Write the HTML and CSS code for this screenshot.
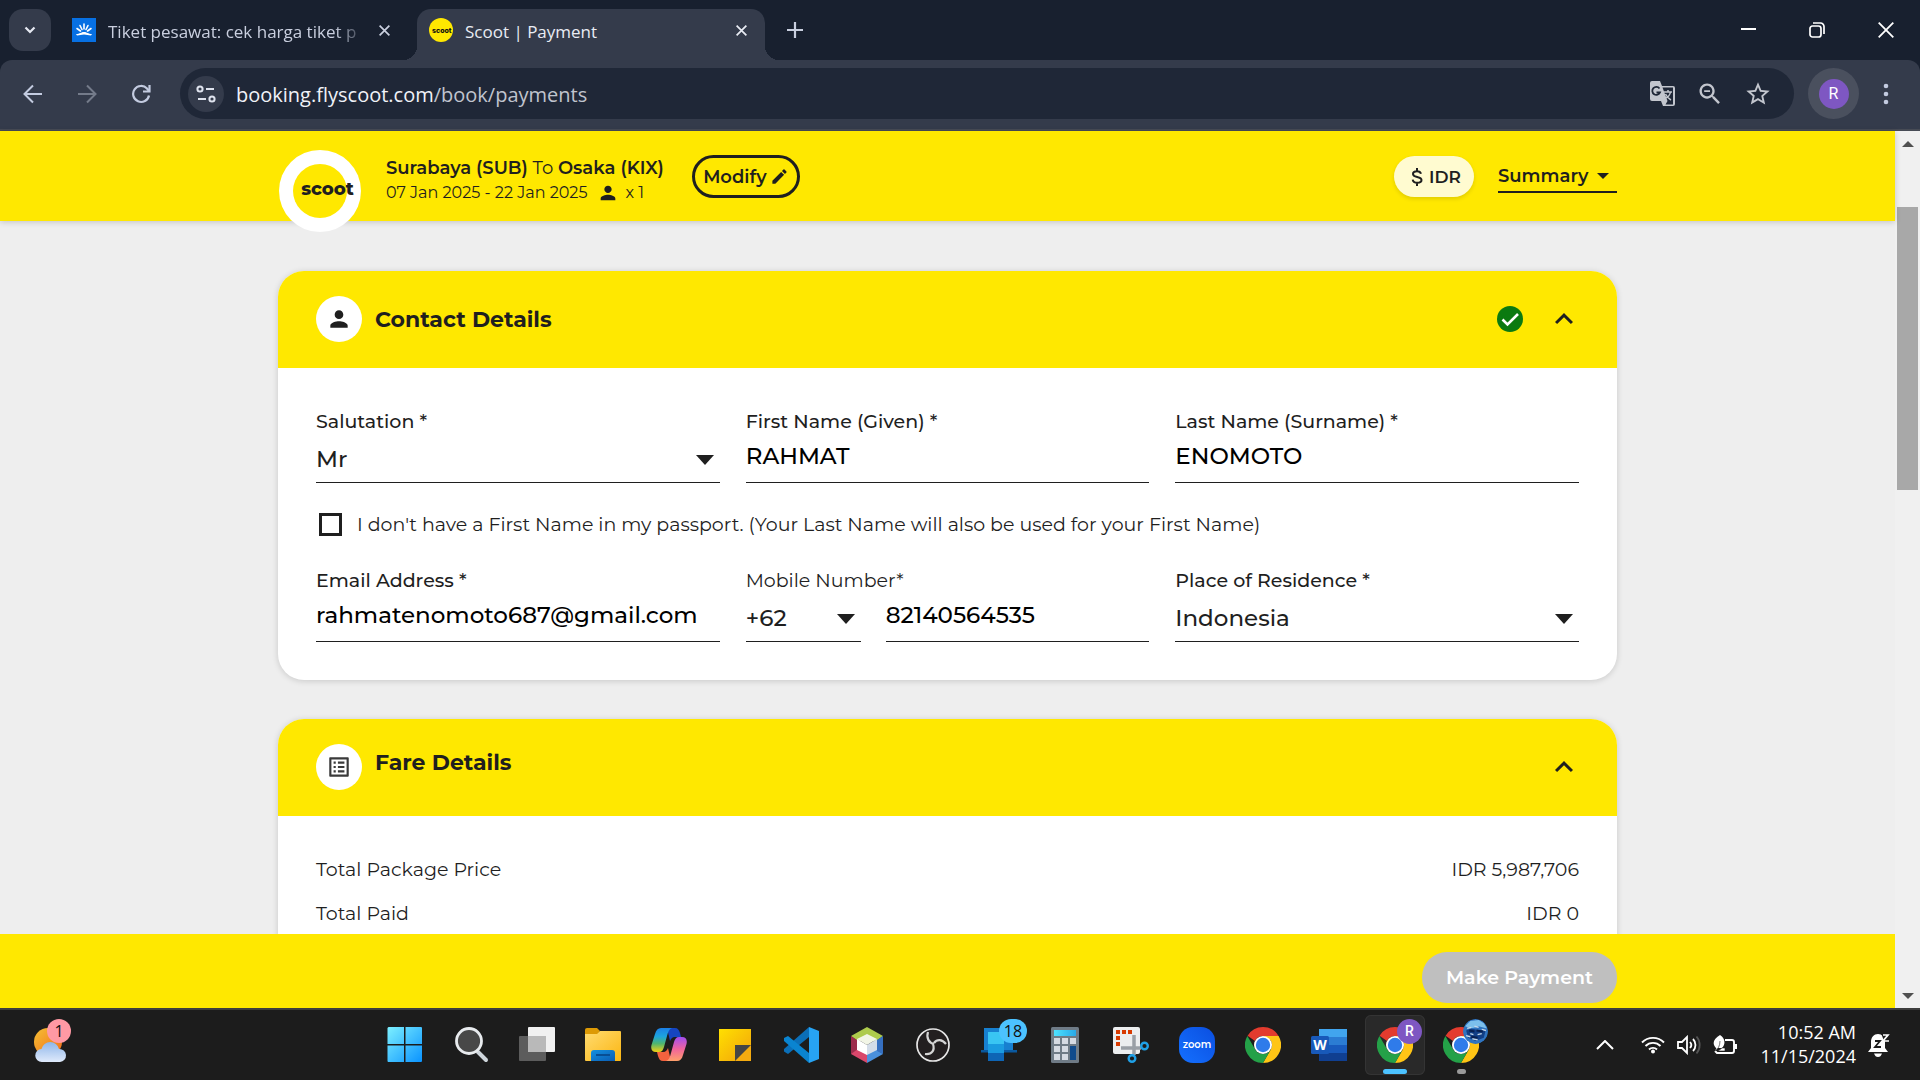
FILE: index.html
```html
<!DOCTYPE html>
<html lang="en">
<head>
<meta charset="utf-8">
<meta name="viewport" content="width=device-width, initial-scale=1">
<title>Scoot | Payment</title>
<link rel="stylesheet" href="styles.css">
</head>
<body>
<svg class="defs" width="0" height="0" aria-hidden="true">
  <defs>
    <linearGradient id="g-win" x1="0" y1="0" x2="1" y2="1"><stop offset="0" stop-color="#7df0ff"/><stop offset="1" stop-color="#0a93ff"/></linearGradient>
    <linearGradient id="g-sun" x1="0" y1="0" x2="1" y2="1"><stop offset="0" stop-color="#f5c033"/><stop offset="1" stop-color="#f26a1b"/></linearGradient>
    <linearGradient id="g-cloud" x1="0" y1="0" x2="0" y2="1"><stop offset="0" stop-color="#8fb6ea"/><stop offset="1" stop-color="#dfeafb"/></linearGradient>
    <linearGradient id="g-folder" x1="0" y1="0" x2="1" y2="1"><stop offset="0" stop-color="#ffdb70"/><stop offset="1" stop-color="#fbb612"/></linearGradient>
    <linearGradient id="g-pocket" x1="0" y1="0" x2="1" y2="1"><stop offset="0" stop-color="#1490df"/><stop offset="1" stop-color="#0a5db5"/></linearGradient>
    <linearGradient id="g-cop1" x1="0" y1="0" x2="0" y2="1"><stop offset="0" stop-color="#1c7fe6"/><stop offset=".35" stop-color="#1ca4de"/><stop offset=".65" stop-color="#4fb56f"/><stop offset="1" stop-color="#f3d113"/></linearGradient>
    <linearGradient id="g-cop2" x1="0" y1="0" x2="0" y2="1"><stop offset="0" stop-color="#a24df0"/><stop offset=".5" stop-color="#f0649c"/><stop offset="1" stop-color="#ffa06a"/></linearGradient>
    <linearGradient id="g-note" x1="0" y1="0" x2="1" y2="1"><stop offset="0" stop-color="#ffe000"/><stop offset="1" stop-color="#f2a20c"/></linearGradient>
    <linearGradient id="g-calc" x1="0" y1="0" x2="1" y2="0"><stop offset="0" stop-color="#4de2ff"/><stop offset="1" stop-color="#29a9e8"/></linearGradient>
    <linearGradient id="g-zoom" x1="1" y1="0" x2="0" y2="1"><stop offset="0" stop-color="#0b4fe0"/><stop offset="1" stop-color="#1470ff"/></linearGradient>
    <symbol id="chrome" viewBox="0 0 36 36">
      <path fill="#e33b2e" d="M18 0a18 18 0 0 1 15.600 9H18a9 9 0 0 0-8 5L2.600 8.700A18 18 0 0 1 18 0z"/>
      <path fill="#ffc515" d="M33.600 9A18 18 0 0 1 18 36l7.800-13.500A9 9 0 0 0 25.800 13.500L18 9z"/>
      <path fill="#24a148" d="M18 36A18 18 0 0 1 2.400 9l7.800 13.500A9 9 0 0 0 25.800 22.500z"/>
      <circle cx="18" cy="18" r="9" fill="#fff"/><circle cx="18" cy="18" r="7.200" fill="#2f7bea"/>
    </symbol>
    <symbol id="person" viewBox="0 0 24 24"><path d="M12 12c2.210 0 4-1.790 4-4s-1.790-4-4-4-4 1.790-4 4 1.790 4 4 4zm0 2c-2.670 0-8 1.340-8 4v2h16v-2c0-2.660-5.330-4-8-4z"/></symbol>
    <symbol id="chevron" viewBox="0 0 24 24"><path d="M12 8l-6 6 1.410 1.410L12 10.830l4.590 4.580L18 14z"/></symbol>
    <symbol id="close" viewBox="0 0 12 12"><path d="M1.500 1.500l9 9M10.500 1.500l-9 9" fill="none" stroke="currentColor" stroke-width="1.600"/></symbol>
  </defs>
</svg>

<div class="browser">
  <div class="tabstrip">
    <button class="tab-search" aria-label="Search tabs"><svg width="12" height="8" viewBox="0 0 12 8"><path d="M1.500 1.500L6 6l4.500-4.500" fill="none" stroke="#e6e9f2" stroke-width="2.200"/></svg></button>
    <div class="tab">
      <svg width="24" height="24" viewBox="0 0 24 24"><path fill="#0770e3" d="M0 0h24v24H0z"/><path d="M12 6v5M8 7.500l2 4M16 7.500l-2 4M5 10.500l3.500 2.500M19 10.500L15.500 13" stroke="#fff" stroke-width="1.600" stroke-linecap="round"/><path d="M4 16c4 0 5-2 8-2s4 2 8 2l-1 1.500c-3 0-4-1-7-1s-4 1-7 1z" fill="#fff"/></svg>
      <span class="tab-title faded">Tiket pesawat: cek harga tiket p</span>
      <button class="tab-close" aria-label="Close tab"><svg width="13" height="13"><use href="#close"/></svg></button>
    </div>
    <div class="tab active">
      <svg width="24" height="24" viewBox="0 0 24 24"><circle cx="12" cy="12" r="12" fill="#ffe800"/><text x="3" y="15" class="fav-word">scoot</text></svg>
      <span class="tab-title">Scoot | Payment</span>
      <button class="tab-close" aria-label="Close tab"><svg width="13" height="13"><use href="#close"/></svg></button>
    </div>
    <button class="new-tab" aria-label="New tab"><svg width="16" height="16" viewBox="0 0 16 16"><path d="M8 0v16M0 8h16" stroke="currentColor" stroke-width="2.200"/></svg></button>
    <div class="win-controls">
      <button aria-label="Minimize"><svg width="16" height="16" viewBox="0 0 16 16"><path d="M1 7h15" stroke="#fff" stroke-width="2"/></svg></button>
      <button aria-label="Restore"><svg width="16" height="16" viewBox="0 0 16 16" fill="none" stroke="#fff" stroke-width="1.700"><rect x="1" y="4" width="11" height="11" rx="2.500"/><path d="M4 1h7.500A3.500 3.500 0 0 1 15 4.500V12"/></svg></button>
      <button aria-label="Close"><svg width="16" height="16" viewBox="0 0 16 16"><path d="M.7.700l14.600 14.600M15.300.700L.700 15.300" stroke="#fff" stroke-width="1.800"/></svg></button>
    </div>
  </div>

  <div class="toolbar">
    <button class="nav" aria-label="Back"><svg width="20" height="20" viewBox="0 0 20 20" fill="none" stroke="#c3cbe0" stroke-width="2"><path d="M19 10H2M10 1.500L1.500 10l8.500 8.500"/></svg></button>
    <button class="nav" aria-label="Forward"><svg width="20" height="20" viewBox="0 0 20 20" fill="none" stroke="#747b8a" stroke-width="2"><path d="M1 10h17M10 1.500l8.500 8.500-8.500 8.500"/></svg></button>
    <button class="nav" aria-label="Reload"><svg width="20" height="20" viewBox="0 0 20 20" fill="none" stroke="#c3cbe0" stroke-width="2.200"><path d="M18 11.500A8 8 0 1 1 16 4.500L18 7"/><path d="M18.500 1v6.500H12"/></svg></button>
    <div class="omnibox">
      <button class="site-info" aria-label="Site information"><svg width="20" height="18" viewBox="0 0 20 18" fill="none" stroke="#dfe3ee" stroke-width="2"><circle cx="4" cy="4" r="2.600"/><path d="M10 4h8M2 14h8"/><circle cx="16" cy="14" r="2.600"/></svg></button>
      <div class="url"><span class="host">booking.flyscoot.com</span>/book/payments</div>
      <button aria-label="Translate"><svg width="26" height="26" viewBox="0 0 26 26"><path fill="#c3c6ce" d="M2 0h8l2 5h11a2 2 0 0 1 2 2v16a2 2 0 0 1-2 2H13l-2-5H2a2 2 0 0 1-2-2V2a2 2 0 0 1 2-2z"/><path fill="#1f2737" d="M12.500 6.500H23v17h-7.500l2-3.500z"/><path d="M9.500 7.500A4 4 0 1 0 10 11.500H6.500" fill="none" stroke="#1f2737" stroke-width="1.800"/><path d="M14 11h8M18 9v2M20.500 11c-.5 3-3 5.500-6 6.500M15.500 13c1.500 3 3.500 5 5.500 6" fill="none" stroke="#c3c6ce" stroke-width="1.500"/></svg></button>
      <button aria-label="Zoom"><svg width="28" height="28" viewBox="0 0 24 24" fill="#c3c6ce"><path d="M15.500 14h-.79l-.28-.27C15.410 12.590 16 11.110 16 9.500 16 5.910 13.090 3 9.500 3S3 5.910 3 9.500 5.910 16 9.500 16c1.610 0 3.090-.59 4.230-1.570l.27.280v.79l5 4.990L20.490 19l-4.990-5zm-6 0C7.010 14 5 11.990 5 9.500S7.010 5 9.500 5 14 7.010 14 9.500 11.990 14 9.500 14zM7 8.700h5v1.600H7z"/></svg></button>
      <button aria-label="Bookmark"><svg width="28" height="28" viewBox="0 0 24 24" fill="#c3c6ce"><path d="M22 9.240l-7.190-.62L12 2 9.190 8.630 2 9.240l5.460 4.730L5.820 21 12 17.270 18.180 21l-1.630-7.030L22 9.240zM12 15.400l-3.760 2.270 1-4.280-3.320-2.880 4.380-.38L12 6.100l1.710 4.040 4.380.38-3.320 2.880 1 4.280L12 15.400z"/></svg></button>
    </div>
    <button class="profile" aria-label="Profile"><span>R</span></button>
    <button class="menu" aria-label="Menu"><svg width="6" height="22" viewBox="0 0 6 22" fill="#c3cbe0"><circle cx="3" cy="3" r="2.300"/><circle cx="3" cy="11" r="2.300"/><circle cx="3" cy="19" r="2.300"/></svg></button>
  </div>

  <div class="viewport">
    <div class="site">
      <header class="site-header">
        <div class="container header-row">
          <a class="logo" href="#" aria-label="Scoot home"><span class="logo-disc"></span><span class="wordmark">scoot</span></a>
          <div class="trip">
            <div class="route"><b>Surabaya (SUB)</b> To <b>Osaka (KIX)</b></div>
            <div class="dates">07 Jan 2025 - 22 Jan 2025 <svg width="22" height="22"><use href="#person"/></svg> x 1</div>
          </div>
          <button class="modify">Modify <svg width="19" height="19" viewBox="0 0 24 24"><path d="M3 17.250V21h3.750L17.810 9.940l-3.750-3.750L3 17.250zM20.710 7.040a1 1 0 0 0 0-1.410l-2.340-2.340a1 1 0 0 0-1.410 0l-1.830 1.830 3.750 3.750 1.830-1.830z"/></svg></button>
          <button class="currency"><svg width="12" height="18" viewBox="0 0 12 18" fill="none" stroke="#1f1f1f" stroke-width="2"><path d="M10 5.800C9.500 3.800 8 3.200 6 3.200c-2.200 0-4 .9-4 2.700 0 4.200 8.500 1.800 8.500 6.100 0 1.900-1.900 2.800-4.200 2.800-2.500 0-4.300-1-4.600-3.200M6 0v3.200M6 14.800V18"/></svg>IDR</button>
          <button class="summary">Summary <svg width="12" height="6" viewBox="0 0 12 6"><path d="M0 0h12L6 6z"/></svg></button>
        </div>
      </header>

      <main class="content">
        <div class="container stack">
          <section class="card">
            <div class="card-head">
              <span class="badge-icon"><svg width="26" height="26"><use href="#person"/></svg></span>
              <h2>Contact Details</h2>
              <svg class="done" width="26" height="26" viewBox="0 0 26 26"><circle cx="13" cy="13" r="13" fill="#0b7a10"/><path d="M5.500 13.500l5 5L21 8" fill="none" stroke="#fff" stroke-width="2.600"/></svg>
              <button class="toggle" aria-label="Collapse contact details"><svg width="36" height="36"><use href="#chevron"/></svg></button>
            </div>
            <form class="fields">
              <div class="field">
                <label for="salutation">Salutation *</label>
                <div class="select"><select id="salutation"><option>Mr</option></select><svg width="18" height="10" viewBox="0 0 18 10"><path d="M0 0h18L9 10z"/></svg></div>
              </div>
              <div class="field">
                <label for="first">First Name (Given) *</label>
                <input id="first" type="text" value="RAHMAT">
              </div>
              <div class="field">
                <label for="last">Last Name (Surname) *</label>
                <input id="last" type="text" value="ENOMOTO">
              </div>
              <label class="check"><input type="checkbox"> I don't have a First Name in my passport. (Your Last Name will also be used for your First Name)</label>
              <div class="field">
                <label for="email">Email Address *</label>
                <input id="email" type="email" value="rahmatenomoto687@gmail.com">
              </div>
              <div class="field">
                <label class="light" for="mobile">Mobile Number*</label>
                <div class="phone">
                  <div class="select"><select aria-label="Country code"><option>+62</option></select><svg width="18" height="10" viewBox="0 0 18 10"><path d="M0 0h18L9 10z"/></svg></div>
                  <input id="mobile" type="tel" value="82140564535">
                </div>
              </div>
              <div class="field">
                <label for="residence">Place of Residence *</label>
                <div class="select"><select id="residence"><option>Indonesia</option></select><svg width="18" height="10" viewBox="0 0 18 10"><path d="M0 0h18L9 10z"/></svg></div>
              </div>
            </form>
          </section>

          <section class="card">
            <div class="card-head fare">
              <span class="badge-icon"><svg width="26" height="26" viewBox="0 0 24 24" fill="#3a3a3a"><path d="M19 5v14H5V5h14m1.100-2H3.900c-.5 0-.9.400-.9.900v16.200c0 .4.400.9.900.9h16.200c.4 0 .9-.5.900-.9V3.900c0-.5-.5-.9-.9-.9zM11 7h6v2h-6V7zm0 4h6v2h-6v-2zm0 4h6v2h-6zM7 7h2v2H7zm0 4h2v2H7zm0 4h2v2H7z"/></svg></span>
              <h2>Fare Details</h2>
              <button class="toggle" aria-label="Collapse fare details"><svg width="36" height="36"><use href="#chevron"/></svg></button>
            </div>
            <dl class="totals">
              <div><dt>Total Package Price</dt><dd>IDR 5,987,706</dd></div>
              <div><dt>Total Paid</dt><dd>IDR 0</dd></div>
            </dl>
          </section>
        </div>
      </main>

      <footer class="pay-bar">
        <div class="container pay-row"><button class="pay" disabled>Make Payment</button></div>
      </footer>
    </div>
    <div class="scrollbar">
      <svg width="12" height="6" viewBox="0 0 12 6"><path d="M6 0l6 6H0z" fill="#505050"/></svg>
      <div class="track"><div class="thumb"></div></div>
      <svg width="12" height="6" viewBox="0 0 12 6"><path d="M0 0h12L6 6z" fill="#505050"/></svg>
    </div>
  </div>
</div>

<div class="taskbar">
  <div class="widgets">
    <button class="app" aria-label="Weather"><svg width="36" height="36" viewBox="0 0 36 36"><circle cx="15" cy="15" r="14" fill="url(#g-sun)"/><path d="M9 35a6.500 6.500 0 0 1-.5-13 9 9 0 0 1 17.500 0A6.500 6.500 0 0 1 27 35z" fill="url(#g-cloud)"/></svg><span class="count pink">1</span></button>
  </div>
  <div class="apps">
    <button class="app" aria-label="Start"><svg width="36" height="36" viewBox="0 0 36 36"><path fill="url(#g-win)" d="M1.500 0H17v17H.500V1zM18.500 0H34a1 1 0 0 1 1 1v16H18.500zM.5 18.500H17V35H1.500a1 1 0 0 1-1-1zM18.500 18.500H35V34a1 1 0 0 1-1 1H18.500z"/></svg></button>
    <button class="app" aria-label="Search"><svg width="36" height="36" viewBox="0 0 36 36"><path d="M25 25l8 8" stroke="#cfd6dc" stroke-width="4" stroke-linecap="round"/><circle cx="16" cy="14" r="12.500" fill="#484848" stroke="#e8ebee" stroke-width="2.800"/></svg></button>
    <button class="app" aria-label="Task view"><svg width="36" height="36" viewBox="0 0 36 36"><rect x="9" y="0" width="27" height="25" rx="1" fill="#f1f1f1"/><rect x="0" y="9" width="27" height="25" rx="1" fill="#5c5c5c"/><path d="M9 9h18v16H9z" fill="#b9b9b9"/></svg></button>
    <button class="app" aria-label="File Explorer"><svg width="36" height="36" viewBox="0 0 36 36"><path d="M0 3a2 2 0 0 1 2-2h10l3 3-3 4H0z" fill="#dd9a05"/><path d="M0 7h12l3-3h20a1 1 0 0 1 1 1v28a1 1 0 0 1-1 1H1a1 1 0 0 1-1-1z" fill="url(#g-folder)"/><path d="M6 34V26a3 3 0 0 1 3-3h18a3 3 0 0 1 3 3v8z" fill="url(#g-pocket)"/><path d="M11 28h14" stroke="#084e94" stroke-width="2"/></svg></button>
    <button class="app" aria-label="Copilot"><svg width="36" height="36" viewBox="0 0 36 36"><path d="M16 1h8c3 0 4 2 5 5l1 4h-6c-3 0-4 2-5 4z" fill="#1545c0"/><path d="M20 34h-8c-3 0-4-2-5-5l-1-4h6c3 0 4-2 5-4z" fill="#f4623e"/><path d="M10 1h11c-3 1-4 4-5 8l-3 11c-1 3-2 5-5 5H5c-4 0-5.500-3-4.500-7L4 7c1-4 3-6 6-6z" fill="url(#g-cop1)"/><path d="M26 34H15c3-1 4-4 5-8l3-11c1-3 2-5 5-5h3c4 0 5.500 3 4.500 7L32 28c-1 4-3 6-6 6z" fill="url(#g-cop2)"/></svg></button>
    <button class="app" aria-label="Sticky Notes"><svg width="36" height="36" viewBox="0 0 36 36"><path d="M2 2h32v32H2z" fill="url(#g-note)"/><path d="M34 18v16H18z" fill="#f5ab10"/><path d="M18 18h16L18 34z" fill="#454545"/></svg></button>
    <button class="app" aria-label="Visual Studio Code"><svg width="36" height="36" viewBox="0 0 36 36"><path d="M26 0v10L5 27 1 24.500V22z" fill="#0b6fb8"/><path d="M1 11l4-2 21 17v10L1 14z" fill="#0a84d0"/><path d="M26 0l10 4v28l-10 4z" fill="#27a3f3"/></svg></button>
    <button class="app" aria-label="NetBeans"><svg width="36" height="36" viewBox="0 0 36 36"><path d="M18 0l16 9-8 6-8-6-8 6-8-6z" fill="#aecb4c"/><path d="M2 9l6 4v13l-6 1z" fill="#9c2c4c"/><path d="M2 27l7-5 9 5v9z" fill="#d9476b"/><path d="M34 27l-7-5-9 5v9z" fill="#4a90dc"/><path d="M34 9l-6 4v11l6 3z" fill="#356fc0"/><path d="M18 7l10 5-10 6-10-6z" fill="#f2f5e6"/><path d="M8 12l10 6v10L8 23z" fill="#fff"/><path d="M28 12l-10 6v10l10-5z" fill="#d3dce8"/></svg></button>
    <button class="app" aria-label="OBS Studio"><svg width="36" height="36" viewBox="0 0 36 36"><circle cx="18" cy="18" r="16" fill="#231f20" stroke="#e6e6e6" stroke-width="1.700"/><path d="M13 5c-2 6 1 11 6 12M31 17c-4-5-9-5-12-1M10 27c7 1 10-4 8-10" fill="none" stroke="#d5d5d5" stroke-width="2.200"/></svg></button>
    <button class="app" aria-label="Phone Link"><svg width="36" height="36" viewBox="0 0 36 36"><path d="M3 1h29v22H3z" fill="#1780d0"/><path d="M0 23h36v2.500H0z" fill="#0a599f"/><path d="M7 5h16v29H7z" fill="#1a9be0"/><path d="M7 5h16v12H7z" fill="#39c5f3"/><path d="M7 26h16v8H7z" fill="#0e65b5"/></svg><span class="count blue">18</span></button>
    <button class="app" aria-label="Calculator"><svg width="36" height="36" viewBox="0 0 36 36"><rect x="4" y="0" width="28" height="36" rx="1.500" fill="#6f7b86"/><path d="M7 3h22v6H7z" fill="url(#g-calc)"/><path d="M7 11h6v6H7zM15 11h6v6h-6zM23 11h6v6h-6zM7 19h6v6H7zM15 19h6v6h-6zM7 27h6v6H7zM15 27h6v6h-6z" fill="#d5dae2"/><path d="M23 19h6v14h-6z" fill="#104b8c"/></svg></button>
    <button class="app" aria-label="Snipping Tool"><svg width="36" height="36" viewBox="0 0 36 36"><rect width="27" height="27" rx="2" fill="#eceeef"/><path d="M3 3h4v4H3zM9 3h4v4H9zM15 3h4v4h-4zM3 9h4v4H3zM3 15h4v4H3z" fill="#d83b01"/><path d="M8 21h20M21 8v20" stroke="#9aa0a6" stroke-width="3.500"/><circle cx="31.500" cy="19" r="3.300" fill="none" stroke="#1fa0e6" stroke-width="2.400"/><circle cx="19" cy="31.500" r="3.300" fill="none" stroke="#1fa0e6" stroke-width="2.400"/></svg></button>
    <button class="app" aria-label="Zoom"><svg width="36" height="36" viewBox="0 0 36 36"><rect width="36" height="36" rx="14" fill="url(#g-zoom)"/><text x="18" y="21" text-anchor="middle" class="zoom-word">zoom</text></svg></button>
    <button class="app" aria-label="Google Chrome"><svg width="36" height="36"><use href="#chrome"/></svg></button>
    <button class="app" aria-label="Word"><svg width="36" height="36" viewBox="0 0 36 36"><path d="M8 2h28v8H8z" fill="#41a5ee"/><path d="M8 10h28v8H8z" fill="#2b7cd3"/><path d="M8 18h28v8H8z" fill="#185abd"/><path d="M8 26h28v8H8z" fill="#103f91"/><rect y="9" width="18" height="18" rx="1.500" fill="#1859b9"/><text x="9" y="23" text-anchor="middle" class="word-w">W</text></svg></button>
    <button class="app running current" aria-label="Chrome, profile R"><svg width="36" height="36"><use href="#chrome"/></svg><span class="avatar">R</span></button>
    <button class="app running" aria-label="Chrome, second profile"><svg width="36" height="36"><use href="#chrome"/></svg><svg class="avatar photo" viewBox="0 0 24 24"><circle cx="12" cy="12" r="12" fill="#2f74c0"/><path d="M2 7l5-5 8-1 5 3 3 5-8-2-7 2z" fill="#7cc0ec"/><path d="M3 11l5-2 8 2 6-1-2 8-8 3-7-3z" fill="#123f86"/><path d="M4 9l4-1M11 7l4 1M18 10l4 1M7 14l3 1M14 15l4-1M9 19l5 1M3 16l4 1" stroke="#c5d8e8" stroke-width="1.400"/><path d="M6 11l5 1M13 11l6 1M8 17l6 1" stroke="#071f4f" stroke-width="1.800"/></svg></button>
  </div>
  <div class="tray">
    <svg class="up" width="18" height="10" viewBox="0 0 18 10"><path d="M1 9l8-8 8 8" fill="none" stroke="#fff" stroke-width="2"/></svg>
    <svg width="24" height="18" viewBox="0 0 24 18" fill="none" stroke="#fff" stroke-width="1.900"><path d="M1 6.500a15.500 15.500 0 0 1 22 0M4.500 10a10.500 10.500 0 0 1 15 0M8 13.500a5.700 5.700 0 0 1 8 0"/><circle cx="12" cy="15.500" r="2" fill="#fff" stroke="none"/></svg>
    <svg width="24" height="20" viewBox="0 0 24 20" fill="none" stroke="#fff" stroke-width="1.800"><path d="M1 7h4l5-5v16l-5-5H1z"/><path d="M13 7a4.500 4.500 0 0 1 0 6M16 4a8.500 8.500 0 0 1 0 12"/><path d="M19.500 1.500a13 13 0 0 1 0 17" stroke="#555"/></svg>
    <svg width="24" height="20" viewBox="0 0 24 20"><path d="M12 5h7a2 2 0 0 1 2 2v9a2 2 0 0 1-2 2H4l-2-2" fill="none" stroke="#fff" stroke-width="1.900"/><path d="M21.500 9H24v5h-2.500zM7 0c5 3 6 9 2 13H3C-1 9 0 4 7 0z" fill="#fff"/><path d="M7 6c0 5-2 8-5 10M9 13h3v3H5z" fill="#fff" stroke="#1c1c1c" stroke-width=".6"/></svg>
    <div class="clock"><span>10:52 AM</span><span>11/15/2024</span></div>
    <svg width="22" height="24" viewBox="0 0 22 24"><path d="M0 19l3-4V9C3 4 6 1 10 1s7 3 7 8v6l3 4zM6 20.500h8C13 23 12 24 10 24s-3-1-4-3.500z" fill="#fff"/><path d="M13 0h9v8h-6z" fill="#1c1c1c"/><path d="M7 8h5l-5 6h6" fill="none" stroke="#1c1c1c" stroke-width="1.800"/><path d="M15 2h5l-5 6h6" fill="none" stroke="#fff" stroke-width="1.700"/></svg>
  </div>
</div>
</body>
</html>
```
FILE: styles.css
```css
* { box-sizing: border-box; }

body {
  margin: 0;
  height: 100vh;
  display: flex;
  flex-direction: column;
  overflow: hidden;
  background: #18202f;
  font-family: "Segoe UI", "Open Sans", sans-serif;
}

button {
  margin: 0;
  padding: 0;
  border: 0;
  background: none;
  color: inherit;
  font: inherit;
  display: flex;
  align-items: center;
  justify-content: center;
}

svg { flex: none; display: block; }
.defs { position: absolute; }

/* Browser frame */
.browser {
  flex: 1;
  min-height: 0;
  display: flex;
  flex-direction: column;
}

.tabstrip {
  height: 60px;
  flex: none;
  display: flex;
  align-items: center;
  padding-left: 9px;
  color: #c9cfdf;
}

.tab-search {
  width: 42px;
  height: 42px;
  border-radius: 14px;
  background: #343b4b;
}

.tab {
  width: 366px;
  height: 51px;
  align-self: flex-end;
  display: flex;
  align-items: center;
  gap: 12px;
  padding: 0 26px 9px 21px;
}

.tab.active {
  position: relative;
  width: 348px;
  padding: 0 17px 9px 12px;
  border-radius: 14px 14px 0 0;
  background: #343b4b;
  color: #e9ecf4;
}

.tab.active::before,
.tab.active::after {
  content: "";
  position: absolute;
  bottom: 0;
  width: 14px;
  height: 14px;
}

.tab.active::before {
  right: 100%;
  background: radial-gradient(circle at 0 0, transparent 14px, #343b4b 14px);
}

.tab.active::after {
  left: 100%;
  background: radial-gradient(circle at 100% 0, transparent 14px, #343b4b 14px);
}

.tab-title {
  flex: 1;
  padding-top: 3px;
  overflow: hidden;
  white-space: nowrap;
  font-size: 17px;
  line-height: 28px;
}

.faded {
  -webkit-mask-image: linear-gradient(90deg, #000 88%, transparent);
  mask-image: linear-gradient(90deg, #000 88%, transparent);
}

.fav-word { font: 800 7px Inter, sans-serif; fill: #111; }
.new-tab { width: 60px; height: 42px; }

.win-controls {
  margin-left: auto;
  display: flex;
  align-self: stretch;
}

.win-controls button { width: 69px; }

.toolbar {
  height: 71px;
  flex: none;
  display: flex;
  align-items: center;
  padding: 0 27px 2px 6px;
  border-bottom: 2px solid #474b55;
  border-radius: 12px 12px 0 0;
  background: #343b4b;
}

.nav { width: 54px; height: 51px; }

.omnibox {
  flex: 1;
  height: 51px;
  margin: 0 14px 0 12px;
  padding: 0 22px 0 8px;
  display: flex;
  align-items: center;
  gap: 20px;
  border-radius: 26px;
  background: #1f2737;
}

.site-info {
  width: 36px;
  height: 36px;
  margin-right: -8px;
  border-radius: 50%;
  background: #343b4b;
}

.url {
  flex: 1;
  padding-top: 2px;
  font-size: 20px;
  color: #c0c4ce;
}

.host { color: #f0f2f7; }

.profile {
  width: 51px;
  height: 51px;
  border-radius: 50%;
  background: #4a505e;
}

.profile span {
  width: 30px;
  height: 30px;
  border-radius: 50%;
  background: #7e57c2;
  color: #fff;
  font: 16px/30px Roboto, sans-serif;
}

.menu { width: 54px; margin-right: -20px; }

/* Page */
.viewport {
  flex: 1;
  min-height: 0;
  display: flex;
}

.site {
  flex: 1;
  min-width: 0;
  display: flex;
  flex-direction: column;
  background: #eee;
  color: #1f1f1f;
  fill: #1f1f1f;
  font-family: Montserrat, Inter, sans-serif;
}

.container {
  width: 100%;
  max-width: 1339px;
  margin: 0 auto;
}

.site-header {
  position: relative;
  flex: none;
  height: 90px;
  background: #ffe800;
  box-shadow: 0 1px 6px rgba(0, 0, 0, .18);
}

.header-row {
  display: flex;
  align-items: flex-start;
  padding-top: 19px;
}

.logo {
  width: 82px;
  height: 82px;
  margin: 0 25px 0 1px;
  display: grid;
  place-items: center;
  border-radius: 50%;
  background: #fff;
  color: #1f1f1f;
  text-decoration: none;
}

.logo > * { grid-area: 1 / 1; }

.logo-disc {
  width: 54px;
  height: 54px;
  border-radius: 50%;
  background: #ffe800;
}

.wordmark {
  padding: 0 0 4px 15px;
  font-size: 18px;
  font-weight: 800;
  line-height: 24px;
}

.trip { margin-right: 28px; padding-top: 6px; }
.route { font-size: 18px; line-height: 24px; font-weight: 400; }
.route b { font-weight: 600; }

.dates {
  display: flex;
  align-items: center;
  font-size: 16px;
  line-height: 26px;
}

.dates svg { margin: 0 6px 0 10px; }

.modify {
  width: 108px;
  height: 43px;
  margin-top: 5px;
  gap: 3px;
  border: 3px solid #1f1f1f;
  border-radius: 22px;
  font-size: 18px;
  font-weight: 600;
}

.currency {
  width: 80px;
  height: 41px;
  margin: 6px 24px 0 auto;
  gap: 6px;
  padding-left: 4px;
  border-radius: 21px;
  background: #fffbd0;
  box-shadow: 0 2px 4px rgba(0, 0, 0, .12);
  font-size: 17px;
  font-weight: 600;
}

.summary {
  width: 119px;
  height: 33px;
  margin-top: 10px;
  gap: 9px;
  justify-content: flex-start;
  border-bottom: 2px solid #1f1f1f;
  font-size: 18px;
  font-weight: 600;
}

.content {
  flex: 1;
  min-height: 0;
  overflow: hidden;
  padding-top: 50px;
}

.stack { display: grid; gap: 39px; }

.card {
  border-radius: 26px;
  background: #fff;
  box-shadow: 0 1px 6px rgba(0, 0, 0, .16);
}

.card-head {
  height: 97px;
  display: flex;
  align-items: center;
  gap: 13px;
  padding: 0 35px 2px 38px;
  border-radius: 26px 26px 0 0;
  background: #ffe800;
}

.card-head h2 {
  flex: 1;
  margin: 0;
  padding-top: 2px;
  font-size: 22px;
  line-height: 28px;
  font-weight: 700;
}

.card-head.fare h2 { padding: 0 0 8px; }

.badge-icon {
  width: 46px;
  height: 46px;
  display: grid;
  place-items: center;
  border-radius: 50%;
  background: #fff;
}

.done { margin-right: 10px; }

.fields {
  display: grid;
  grid-template-columns: repeat(3, 1fr);
  column-gap: 26px;
  padding: 41px 38px 38px;
}

.field {
  display: grid;
  min-width: 0;
}

.field label {
  height: 24px;
  font-size: 19px;
  line-height: 26px;
  font-weight: 500;
}

.field .light { font-weight: 400; }

.field input,
.field select {
  width: 100%;
  height: 50px;
  margin: 0;
  border: 0;
  border-bottom: 1px solid #1f1f1f;
  border-radius: 0;
  background: transparent;
  font: 500 23px/28px Montserrat, Inter, sans-serif;
  appearance: none;
  outline: 0;
}

.field input { padding: 0 0 3px; color: #000; }
.field select { padding: 3px 0 0; color: #1f1f1f; }

.select { display: grid; align-items: center; }
.select > * { grid-area: 1 / 1; }
.select svg { justify-self: end; margin: 4px 6px 0; pointer-events: none; }

.phone {
  display: grid;
  grid-template-columns: 115px 1fr;
  gap: 25px;
}

.check {
  grid-column: 1 / -1;
  height: 85px;
  padding-bottom: 2px;
  display: flex;
  align-items: center;
  gap: 15px;
  font-size: 19px;
}

.check input {
  width: 23px;
  height: 23px;
  margin: 0 0 0 3px;
  border: 3px solid #1f1f1f;
  appearance: none;
}

.totals {
  margin: 0;
  padding: 32px 38px;
  font-size: 19px;
}

.totals div {
  display: flex;
  justify-content: space-between;
  line-height: 44px;
}

.totals dd { margin: 0; }

.pay-bar {
  position: relative;
  flex: none;
  padding: 18px 0 5px;
  background: #ffe800;
}

.pay-row { display: flex; justify-content: flex-end; }

.pay {
  width: 195px;
  height: 51px;
  border-radius: 25px;
  background: #bfbfbf;
  color: #fff;
  font-size: 19px;
  font-weight: 600;
}

.scrollbar {
  width: 25px;
  flex: none;
  display: flex;
  flex-direction: column;
  align-items: center;
  padding: 10px 0 9px;
  background: #f0f0f0;
}

.track { flex: 1; padding-top: 60px; }

.thumb {
  width: 21px;
  height: 36%;
  background: #a8a8a8;
}

/* Taskbar */
.taskbar {
  height: 72px;
  flex: none;
  display: grid;
  grid-template-columns: 1fr auto 429px;
  align-items: center;
  border-top: 2px solid #3d3d3d;
  background: #1c1c1c;
  color: #fff;
}

.widgets { padding-left: 21px; }
.apps { display: flex; gap: 6px; }

.app {
  position: relative;
  width: 60px;
  height: 60px;
  border-radius: 6px;
}

.current { background: #292929; box-shadow: inset 0 0 0 1px #343434; }

.running::after {
  content: "";
  position: absolute;
  bottom: 1px;
  left: 26px;
  width: 9px;
  height: 5px;
  border-radius: 3px;
  background: #9a9a9a;
}

.current::after { left: 18px; width: 24px; background: #4cc2ff; }

.count {
  position: absolute;
  top: 4px;
  right: 2px;
  min-width: 24px;
  height: 24px;
  border-radius: 12px;
  color: #101010;
  font-size: 16px;
  line-height: 24px;
  text-align: center;
}

.pink { right: 10px; background: #ff99a4; }
.blue { width: 28px; background: #4cc2ff; }

.avatar {
  position: absolute;
  top: 4px;
  right: 3px;
  width: 25px;
  height: 25px;
  border-radius: 50%;
  background: #7e57c2;
  font: 500 14px/25px Roboto, sans-serif;
}

.photo { background: none; }

.zoom-word { font: 600 10px Montserrat, Inter, sans-serif; fill: #fff; }
.word-w { font: 700 14px "Open Sans", sans-serif; fill: #fff; }

.tray {
  display: flex;
  align-items: center;
  gap: 12px;
  padding-right: 30px;
  justify-content: flex-end;
}

.up { margin-right: 15px; }

.clock {
  width: 107px;
  display: grid;
  padding-bottom: 3px;
  text-align: right;
  font-size: 18px;
  line-height: 24px;
}
```
